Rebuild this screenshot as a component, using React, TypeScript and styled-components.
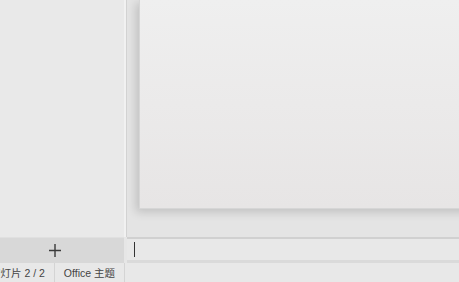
import styled, { createGlobalStyle } from "styled-components";

const GlobalStyle = createGlobalStyle`
  html, body {
    margin: 0;
    padding: 0;
    overflow: hidden;
    background: #e8e8e8;
  }
  * { box-sizing: border-box; }
`;

const Window = styled.div`
  width: 459px;
  height: 282px;
  display: flex;
  flex-direction: column;
  font-family: "Liberation Sans", "Noto Sans CJK SC", sans-serif;
  overflow: hidden;
`;

const Workspace = styled.div`
  display: flex;
  height: 237px;
`;

const ThumbPane = styled.div`
  width: 124px;
  background: #e9e9e9;
`;

const Splitter = styled.div`
  width: 3px;
  background: #f1f1f1;
  border-right: 1px solid #d2d2d2;
`;

const Stage = styled.div`
  flex: 1;
  background: #e4e4e4;
  padding-left: 12px;
  overflow: hidden;
`;

const Slide = styled.div`
  height: 209px;
  width: 340px;
  background: linear-gradient(#efefef, #e7e5e5);
  border-left: 1px solid #d6d6d6;
  border-bottom: 1px solid #d6d6d6;
  box-shadow: -3px 3px 9px rgba(0, 0, 0, 0.16);
`;

const BottomRow = styled.div`
  display: flex;
  height: 26px;
`;

const AddBar = styled.div`
  width: 124px;
  background: #d8d8d8;
  display: flex;
  align-items: center;
  padding-left: 49px;
  border-top: 1px solid #e0e0e0;
`;

const NotesGap = styled.div`
  width: 3px;
  background: #e6e6e6;
`;

const Notes = styled.div`
  flex: 1;
  background: #e8e8e8;
  border-top: 2px solid #d0d0d0;
  border-bottom: 3px solid #dadada;
  padding-left: 7px;
  display: flex;
  align-items: center;
`;

const Caret = styled.div`
  width: 1px;
  height: 15px;
  background: #333;
`;

const StatusBar = styled.div`
  height: 19px;
  background: #e8e8e8;
  display: flex;
  align-items: center;
  font-size: 10.5px;
  color: #444;
`;

const StatusItem = styled.div<{ $shift?: number }>`
  height: 100%;
  display: flex;
  align-items: center;
  padding: 0 9px;
  border-right: 1px solid #d4d4d4;
  white-space: nowrap;
  margin-left: ${(p) => p.$shift ?? 0}px;
`;

export default function App() {
  return (
    <Window>
      <GlobalStyle />
      <Workspace>
        <ThumbPane />
        <Splitter />
        <Stage>
          <Slide />
        </Stage>
      </Workspace>
      <BottomRow>
        <AddBar>
          <svg width="12" height="13" viewBox="0 0 12 13">
            <path d="M6 0v13M0 6.5h12" stroke="#3a3a3a" strokeWidth="1.4" />
          </svg>
        </AddBar>
        <NotesGap />
        <Notes>
          <Caret />
        </Notes>
      </BottomRow>
      <StatusBar>
        <StatusItem $shift={-19}>幻灯片 2 / 2</StatusItem>
        <StatusItem>Office 主题</StatusItem>
      </StatusBar>
    </Window>
  );
}
